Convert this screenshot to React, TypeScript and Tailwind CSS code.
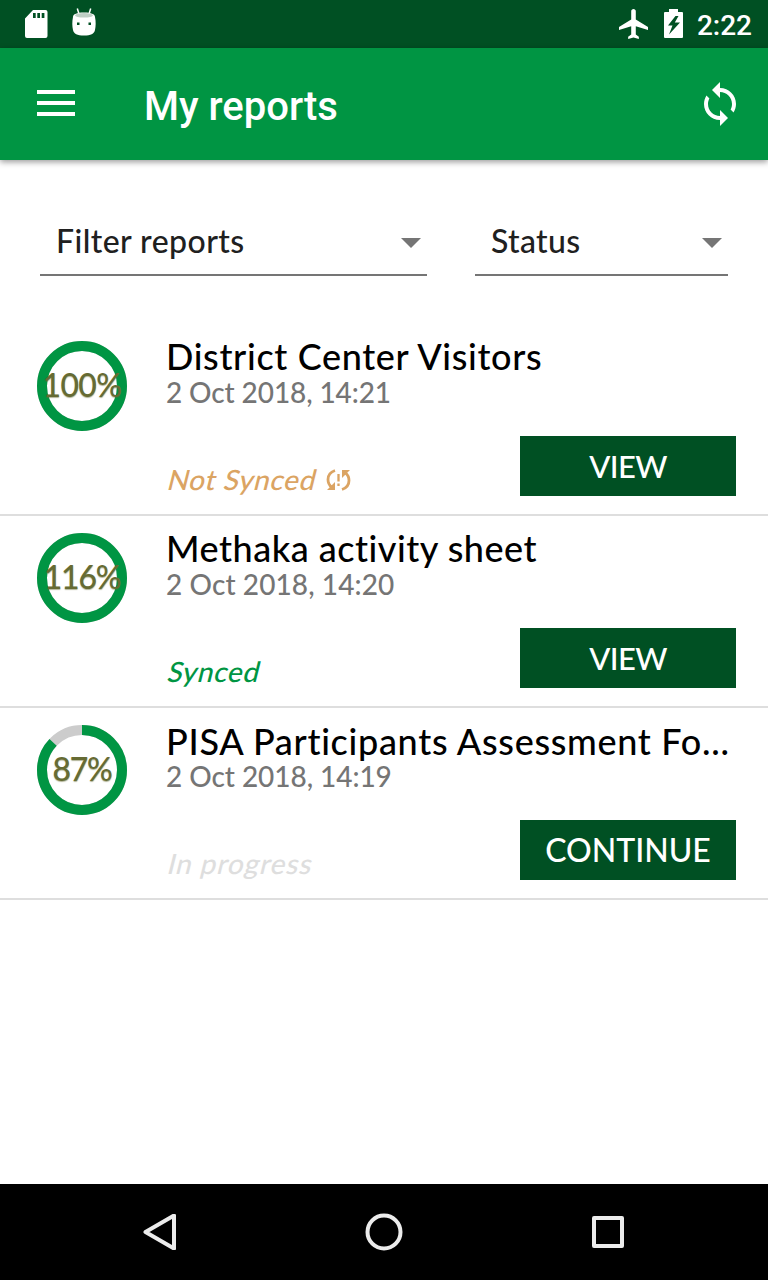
import React from "react";

type Report = {
  title: string;
  date: string;
  percent: number;
  status: string;
  statusClass: string;
  titleClass: string;
  dateClass: string;
  percentClass: string;
  action: string;
  actionClass: string;
  unsynced?: boolean;
};

const reports: Report[] = [
  {
    title: "District Center Visitors",
    date: "2 Oct 2018, 14:21",
    percent: 100,
    status: "Not Synced",
    statusClass: "text-[#dba463] tracking-[0.6px]",
    titleClass: "tracking-[0.66px]",
    dateClass: "tracking-[-0.1px]",
    percentClass: "tracking-[-0.6px]",
    action: "VIEW",
    actionClass: "tracking-[-0.6px] text-[31px]",
    unsynced: true,
  },
  {
    title: "Methaka activity sheet",
    date: "2 Oct 2018, 14:20",
    percent: 116,
    status: "Synced",
    statusClass: "text-[#009543] tracking-[0.6px]",
    titleClass: "tracking-[0.51px]",
    dateClass: "tracking-[0.1px]",
    percentClass: "tracking-[-1.3px]",
    action: "VIEW",
    actionClass: "tracking-[-0.6px] text-[31px]",
  },
  {
    title: "PISA Participants Assessment Fo...",
    date: "2 Oct 2018, 14:19",
    percent: 87,
    status: "In progress",
    statusClass: "text-[#dedede] tracking-[0.87px]",
    titleClass: "tracking-[0.69px] pt-px",
    dateClass: "tracking-[-0.05px]",
    percentClass: "tracking-[-1.3px]",
    action: "CONTINUE",
    actionClass: "tracking-[0px]",
  },
];

function ProgressRing({ percent }: { percent: number }) {
  const circumference = 2 * Math.PI * 40;
  const filled = (Math.min(percent, 100) / 100) * circumference;
  return (
    <svg className="col-start-1 row-start-1 size-[90px]" viewBox="0 0 90 90" fill="none" strokeWidth="10">
      <circle cx="45" cy="45" r="40" stroke="#cccccc" />
      <circle
        cx="45"
        cy="45"
        r="40"
        stroke="#009543"
        strokeDasharray={`${filled} ${circumference - filled}`}
        transform="rotate(-90 45 45)"
      />
    </svg>
  );
}

function SyncAlertIcon() {
  return (
    <svg className="ml-3 h-[22px] w-[25px]" viewBox="0 0 25 22" fill="none" stroke="#dba463">
      <path d="M9 1.500C4.500 3 2 6.500 2 10.500c0 3.200 1.200 5.800 3.700 7.700" strokeWidth="2.800" />
      <path d="M1 21h8v-8z" fill="#dba463" stroke="none" />
      <path d="M16 20.500c4.500-1.500 7-5 7-9 0-3.200-1.200-5.800-3.700-7.700" strokeWidth="2.800" />
      <path d="M24 1h-8v8z" fill="#dba463" stroke="none" />
      <path d="M12.500 5v7.500M12.500 14.500v2.500" strokeWidth="2.300" />
    </svg>
  );
}

function ReportRow({ report }: { report: Report }) {
  return (
    <article className="flex h-48 border-b-2 border-[#dedede] pl-[37px] pr-8">
      <div className="mt-[17px] grid size-[90px] shrink-0 place-items-center">
        <ProgressRing percent={report.percent} />
        <span
          className={`z-10 col-start-1 row-start-1 -mt-0.5 text-[32px] leading-[38px] font-medium text-[#666b33] [text-shadow:0_1px_1px_rgba(102,107,51,0.5)] ${report.percentClass}`}
        >
          {report.percent}%
        </span>
      </div>
      <div className="ml-[39px] flex min-w-0 flex-1 flex-col">
        <h2 className={`mt-[11px] h-[43px] text-[36px] leading-[43px] font-medium whitespace-nowrap text-black ${report.titleClass}`}>
          {report.title}
        </h2>
        <p className={`h-[34px] text-[28px] leading-[28px] font-medium text-[#757575] ${report.dateClass}`}>
          {report.date}
        </p>
        <div className="mt-auto mb-[18px] flex h-[60px] items-end justify-between">
          <div className="flex h-[32px] items-center">
            <span
              className={`mb-0.5 inline-block origin-[0_27px] skew-x-[-14deg] text-[28px] leading-[32px] font-medium whitespace-nowrap ${report.statusClass}`}
            >
              {report.status}
            </span>
            {report.unsynced && <SyncAlertIcon />}
          </div>
          <button className="flex h-[60px] w-[216px] items-center justify-center bg-[#005023] text-[32px] leading-[60px] font-medium text-white">
            <span className={report.actionClass}>{report.action}</span>
          </button>
        </div>
      </div>
    </article>
  );
}

function Select({ label, className, labelClass }: { label: string; className: string; labelClass: string }) {
  return (
    <div className={`flex h-[68px] items-center justify-between border-b-2 border-[#757575] pl-4 ${className}`}>
      <span className={`text-[32px] leading-[60px] font-medium text-[#202020] ${labelClass}`}>{label}</span>
      <svg className="mt-[3px] h-[10px] w-5" viewBox="0 0 20 10">
        <path d="M0 0h20L10 10z" fill="#757575" />
      </svg>
    </div>
  );
}

export default function App() {
  return (
    <div className="flex h-[1280px] w-[768px] flex-col overflow-hidden bg-white font-['Lato',sans-serif]">
      <div className="flex h-12 shrink-0 items-center bg-[#005023] pl-6 pr-4 font-['Roboto',sans-serif] text-white">
        <svg className="h-[30px] w-6" viewBox="0 0 24 30" fill="#fff">
          <path
            fillRule="evenodd"
            d="M9 1h12.500a2 2 0 0 1 2 2v24a2 2 0 0 1-2 2H3a2 2 0 0 1-2-2V9.500zM9 4v5h2.700V4zM13.300 4v5H16V4zM17.700 4v5h2.700V4z"
          />
        </svg>
        <svg className="mb-0.5 ml-6 h-[30px] w-6" viewBox="0 0 24 30">
          <path d="M5.300.5 7 6M18.700.5 17 6" stroke="#fff" strokeWidth="1.500" />
          <path d="M1 9c0-3 4-4.500 11-4.500S23 6 23 9c1 5 .8 9 0 13-1 4-4 5.500-11 5.500S2 26 1 22c-.8-4-1-8 0-13z" fill="#fff" />
          <ellipse cx="12" cy="7.300" rx="9" ry="2.300" fill="#bfcfc5" />
          <path d="M5 14.500h2.500V17H5zM16.500 14.500H19V17h-2.500z" fill="#005023" />
        </svg>
        <svg className="ml-auto h-[30px] w-[29px]" viewBox="2 2 19 20" preserveAspectRatio="none" fill="#fff">
          <path d="M21 16v-2l-8-5V3.500c0-.83-.67-1.500-1.500-1.500S10 2.670 10 3.500V9l-8 5v2l8-2.500V19l-2 1.500V22l3.500-1 3.500 1v-1.500L13 19v-5.500l8 2.500z" />
        </svg>
        <svg className="mb-px ml-4 h-[29px] w-[19px]" viewBox="0 0 19 29" fill="#fff">
          <path
            fillRule="evenodd"
            d="M5 0h9v3h4a1 1 0 0 1 1 1v24a1 1 0 0 1-1 1H1a1 1 0 0 1-1-1V4a1 1 0 0 1 1-1h4zM11.500 7 4 16.500h4.500L5 25.500 16 13.500h-5.200L14.500 7z"
          />
        </svg>
        <span className="ml-[14px] mt-[3px] text-[28px] leading-[44px] font-medium">2:22</span>
      </div>

      <header className="z-10 flex h-28 shrink-0 items-center bg-[#009543] pl-[37px] pr-8 text-white shadow-[0_2px_6px_rgba(0,0,0,0.4)]">
        <div className="mb-0.5 flex w-[38px] flex-col gap-[7px]">
          <div className="h-1 bg-white" />
          <div className="h-1 bg-white" />
          <div className="h-1 bg-white" />
        </div>
        <h1 className="ml-[69px] mt-1.5 font-['Roboto',sans-serif] text-[40px] leading-[56px] font-medium">My reports</h1>
        <svg className="ml-auto h-[44px] w-8" viewBox="4 1 16 22" fill="#fff">
          <path d="M12 4V1L8 5l4 4V6c3.310 0 6 2.690 6 6 0 1.010-.25 1.970-.7 2.800l1.460 1.460C19.540 15.030 20 13.570 20 12c0-4.420-3.580-8-8-8zm0 14c-3.310 0-6-2.690-6-6 0-1.010.25-1.970.7-2.800L5.240 7.740C4.460 8.970 4 10.430 4 12c0 4.420 3.580 8 8 8v3l4-4-4-4v3z" />
        </svg>
      </header>

      <section className="flex h-[164px] shrink-0 gap-12 px-10 pt-12">
        <Select label="Filter reports" className="w-[387px] pr-[6px]" labelClass="tracking-[0.44px]" />
        <Select label="Status" className="w-[253px] pr-[6px]" labelClass="tracking-[0.35px]" />
      </section>

      <main className="flex-1">
        {reports.map((report) => (
          <ReportRow key={report.title} report={report} />
        ))}
      </main>

      <nav className="flex h-24 shrink-0 items-center justify-between bg-black px-[142px]">
        <svg className="size-9" viewBox="0 0 36 36" fill="none" stroke="#ececec" strokeWidth="4" strokeLinejoin="round">
          <path d="M32 1.500v33L3.500 18z" />
        </svg>
        <svg className="size-10" viewBox="0 0 40 40" fill="none" stroke="#ececec" strokeWidth="4">
          <circle cx="20" cy="20" r="16.500" />
        </svg>
        <svg className="size-9" viewBox="0 0 36 36" fill="none" stroke="#ececec" strokeWidth="4" strokeLinejoin="round">
          <path d="M4 4h28v28H4z" />
        </svg>
      </nav>
    </div>
  );
}
